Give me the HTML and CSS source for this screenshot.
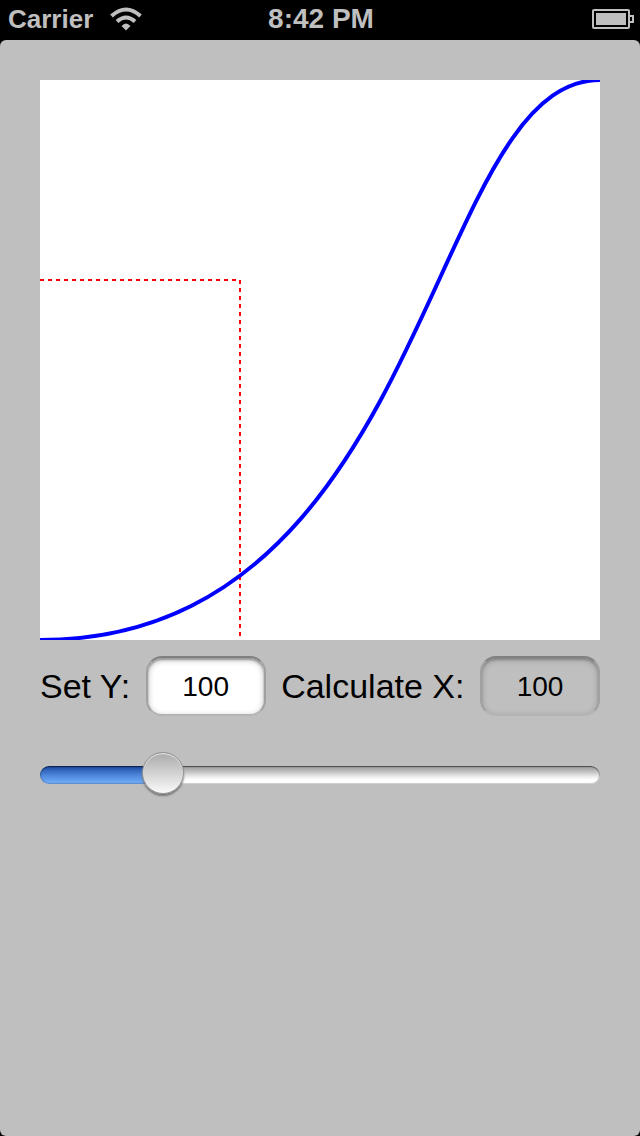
FILE: index.html
```
<!DOCTYPE html>
<html lang="en">
  <head>
    <meta charset="UTF-8">
    <meta name="viewport" content="width=device-width,initial-scale=1">
    <title>Bezier curve</title>
    <link rel="stylesheet" href="styles.css">
  </head>
  <body>
    <header class="status-bar">
      <div class="carrier">
        <span>Carrier</span>
        <svg class="wifi" width="32" height="24" viewBox="0 0 32 24" aria-hidden="true">
          <path d="M1.5 9 Q16 -4 30.5 9" fill="none" stroke="#bfbfbf" stroke-width="4"/>
          <path d="M7 14.5 Q16 6.5 25 14.5" fill="none" stroke="#bfbfbf" stroke-width="4"/>
          <path d="M11.5 19 Q16 14 20.5 19 L16 23.5 Z" fill="#bfbfbf"/>
        </svg>
      </div>
      <time>8:42 PM</time>
      <svg class="battery" width="42" height="20" viewBox="0 0 42 20" aria-hidden="true">
        <rect x="1" y="1" width="36" height="18" rx="1" fill="none" stroke="#bfbfbf" stroke-width="2"/>
        <rect x="4" y="4" width="30" height="12" fill="#bfbfbf"/>
        <path d="M38 7 H41 V13 H38" fill="none" stroke="#bfbfbf" stroke-width="2"/>
      </svg>
    </header>
    <main class="view">
      <svg class="graph" viewBox="0 0 560 560" role="img" aria-label="Curve">
        <path class="guide" d="M0 200 H200"/>
        <path class="guide" d="M200 200 V560"/>
        <path class="curve" d="M0 560 C391 560 386 0 560 0"/>
      </svg>
      <form class="fields">
        <label for="set-y">Set Y:</label>
        <input class="field" id="set-y" type="text" value="100">
        <label for="calc-x">Calculate X:</label>
        <input class="field result" id="calc-x" type="text" value="100" readonly>
      </form>
      <input class="slider" type="range" min="0" max="280" value="55" aria-label="Y">
    </main>
  </body>
</html>
```
FILE: styles.css
```
body {
  margin: 0;
  min-height: 100vh;
  display: flex;
  flex-direction: column;
  background-color: #000;
  font-family: "Liberation Sans", Helvetica, Arial, sans-serif;
}
.status-bar {
  display: grid;
  grid-template-columns: 1fr auto 1fr;
  align-items: center;
  height: 38px;
  padding: 0 6px 2px 8px;
  color: #bfbfbf;
  font-size: 28px;
  font-weight: bold;
}
.carrier {
  display: flex;
  align-items: center;
  gap: 17px;
  font-size: 26px;
}
.battery {
  justify-self: end;
}
.view {
  flex: 1;
  padding: 40px;
  border-radius: 6px;
  background-color: #bfbfbf;
}
.graph {
  display: block;
  width: 100%;
  background-color: #fff;
}
.guide {
  fill: none;
  stroke: #f00;
  stroke-width: 2;
  stroke-dasharray: 4 4;
}
.curve {
  fill: none;
  stroke: #00f;
  stroke-width: 4;
}
.fields {
  display: flex;
  align-items: center;
  justify-content: space-between;
  margin-top: 16px;
  font-size: 34px;
  line-height: 38px;
}
.field {
  box-sizing: border-box;
  width: 120px;
  height: 60px;
  padding: 2px 0 0;
  border: 2px solid;
  border-color: #808080 #a0a0a0 #b4b4b4;
  border-radius: 16px;
  background-color: #fff;
  box-shadow: inset 0 2px 2px #999, inset 0 2px 6px #bbb;
  color: #000;
  font-family: inherit;
  font-size: 28px;
  text-align: center;
}
.result {
  background-color: #bfbfbf;
  box-shadow: inset 0 2px 2px #888, inset 0 2px 6px #999;
}
.slider {
  -webkit-appearance: none;
  appearance: none;
  display: block;
  width: 100%;
  height: 46px;
  margin: 36px 0 0;
  background: transparent;
}
.slider::-webkit-slider-runnable-track {
  height: 18px;
  border-radius: 9px;
  background:
    linear-gradient(#164098, #3468bc 25%, #5089de 55%, #76b0fc) no-repeat 0 0 / 22% 100%,
    linear-gradient(#999, #b8b8b8 25%, #e6e6e6 55%, #fff 75%);
  box-shadow: inset 0 1px 1px rgba(0, 0, 0, 0.4), inset 0 0 1px 1px rgba(0, 0, 0, 0.2);
}
.slider::-webkit-slider-thumb {
  -webkit-appearance: none;
  box-sizing: border-box;
  width: 42px;
  height: 42px;
  margin-top: -14px;
  border: 1px solid #929292;
  border-radius: 50%;
  background: linear-gradient(#aaa, #fafafa);
  box-shadow: 0 2px 2px #777, inset 0 1px 1px #eee;
}
```
